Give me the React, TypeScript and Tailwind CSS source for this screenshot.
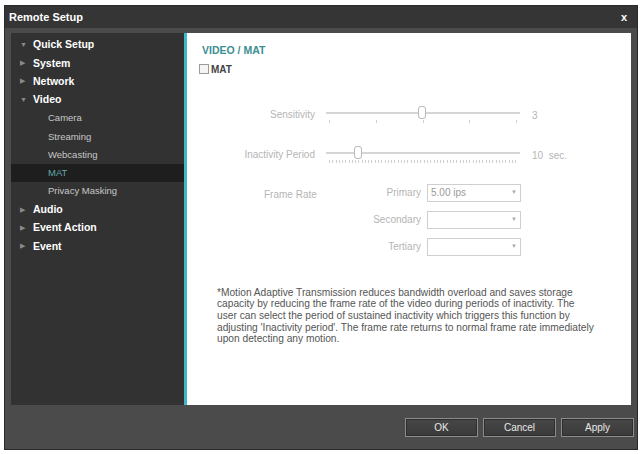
import React from "react";

const font = { fontFamily: '"Liberation Sans", Arial, sans-serif' };

const menu: { label: string; sub?: boolean; active?: boolean; open?: boolean }[] = [
  { label: "Quick Setup", open: true },
  { label: "System" },
  { label: "Network" },
  { label: "Video", open: true },
  { label: "Camera", sub: true },
  { label: "Streaming", sub: true },
  { label: "Webcasting", sub: true },
  { label: "MAT", sub: true, active: true },
  { label: "Privacy Masking", sub: true },
  { label: "Audio" },
  { label: "Event Action" },
  { label: "Event" },
];

function Slider({ pos, ticks, value }: { pos: number; ticks: number; value: string }) {
  return (
    <div className="flex items-center">
      <div className="relative w-[194px] h-[20px]">
        <div className="absolute left-0 right-0 top-[6px] h-[2px] bg-[#d6d6d6]" />
        <div
          className="absolute top-0 w-[8px] h-[13px] rounded-[3px] border border-[#b8b8b8] bg-white"
          style={{ left: pos - 4 }}
        />
        <div className="absolute left-[3px] right-[3px] top-[14px] flex justify-between">
          {Array.from({ length: ticks }).map((_, i) => (
            <div key={i} className="w-px h-[3px] bg-[#cfcfcf]" />
          ))}
        </div>
      </div>
      <span className="ml-[12px] text-[10px] text-[#b5b5b5] whitespace-pre">{value}</span>
    </div>
  );
}

function Select({ value }: { value?: string }) {
  return (
    <div className="w-[94px] h-[18px] border border-[#cfcfcf] bg-white flex items-center px-[3px] text-[10px] text-[#9a9a9a]">
      <span className="flex-1">{value ?? ""}</span>
      <span className="text-[6px] text-[#aaa]">▼</span>
    </div>
  );
}

function Btn({ label }: { label: string }) {
  return (
    <div className="w-[73px] h-[19px] border border-[#8c8c8c] bg-[linear-gradient(#474747,#3a3a3a)] flex items-center justify-center text-[10px] text-[#e8e8e8] shadow-[inset_0_0_0_1px_#2e2e2e]">
      {label}
    </div>
  );
}

export default function App() {
  return (
    <div className="bg-white w-[643px] h-[454px] pt-[5px] pl-[4px]" style={font}>
      <div className="w-[634px] h-[445px] bg-[#4b4b4b] border border-[#2a2a2a] flex flex-col">
        <div className="h-[22px] bg-[#353535] flex items-center justify-between px-[4px]">
          <span className="text-[11px] font-bold text-white">Remote Setup</span>
          <span className="text-[11px] font-bold text-white mr-[6px]">x</span>
        </div>
        <div className="flex mt-[5px] mx-[6px] h-[372px]">
          <div className="w-[173px] bg-[#323232] pt-[3px]">
            {menu.map((m) => (
              <div
                key={m.label}
                className={`h-[18.3px] flex items-center ${m.active ? "bg-[#1e1e1e]" : ""} ${
                  m.sub ? "pl-[37px]" : "pl-[9px]"
                }`}
              >
                {!m.sub && (
                  <span className="w-[13px] text-[7px] text-[#8a8a8a]">{m.open ? "▼" : "▶"}</span>
                )}
                <span
                  className={
                    m.sub
                      ? `text-[9.5px] ${m.active ? "text-[#5fa9a9]" : "text-[#c8c8c8]"}`
                      : "text-[10.5px] font-bold text-white"
                  }
                >
                  {m.label}
                </span>
              </div>
            ))}
          </div>
          <div className="w-[3px] bg-[#3fb7c6]" />
          <div className="flex-1 bg-white pl-[12px] pt-[10px]">
            <div className="text-[10.5px] font-bold text-[#3b8e92] pl-[3px]">VIDEO / MAT</div>
            <div className="flex items-center mt-[3px] gap-[2px]">
              <div className="w-[10px] h-[10px] border border-[#9a9a9a] bg-[#f4f4f4]" />
              <span className="text-[10px] font-bold text-[#444]">MAT</span>
            </div>
            <div className="mt-[29px] flex">
              <div className="w-[116px] text-right text-[10px] text-[#b5b5b5] pt-[1px]">Sensitivity</div>
              <div className="ml-[11px]">
                <Slider pos={96} ticks={5} value="3" />
              </div>
            </div>
            <div className="mt-[20px] flex">
              <div className="w-[116px] text-right text-[10px] text-[#b5b5b5] pt-[1px]">Inactivity Period</div>
              <div className="ml-[11px]">
                <Slider pos={32} ticks={58} value="10  sec." />
              </div>
            </div>
            <div className="mt-[18px] flex">
              <div className="w-[120px] pl-[65px] text-[10px] text-[#b5b5b5] pt-[3px]">Frame Rate</div>
              <div className="flex flex-col gap-[9px]">
                {[
                  ["Primary", "5.00 ips"],
                  ["Secondary", undefined],
                  ["Tertiary", undefined],
                ].map(([l, v]) => (
                  <div key={l} className="flex items-center">
                    <span className="w-[108px] text-right pr-[6px] text-[10px] text-[#b5b5b5]">{l}</span>
                    <Select value={v} />
                  </div>
                ))}
              </div>
            </div>
            <p className="mt-[31px] ml-[18px] whitespace-nowrap text-[10.2px] leading-[11.6px] text-[#555]">
              *Motion Adaptive Transmission reduces bandwidth overload and saves storage
              <br />
              capacity by reducing the frame rate of the video during periods of inactivity. The
              <br />
              user can select the period of sustained inactivity which triggers this function by
              <br />
              adjusting 'Inactivity period'. The frame rate returns to normal frame rate immediately
              <br />
              upon detecting any motion.
            </p>
          </div>
        </div>
        <div className="flex justify-end gap-[5px] pr-[3px] mt-[13px]">
          <Btn label="OK" />
          <Btn label="Cancel" />
          <Btn label="Apply" />
        </div>
      </div>
    </div>
  );
}
